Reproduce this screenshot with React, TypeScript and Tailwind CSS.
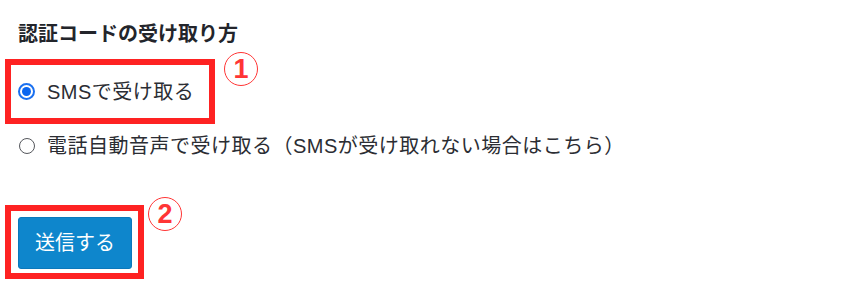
export default function App() {
  return (
    <div
      className="min-h-[304px] w-[861px] bg-white pt-[19px] text-[#2b2d33]"
      style={{ fontFamily: '"Liberation Sans", "Noto Sans CJK JP", sans-serif' }}
    >
      <h2 className="ml-[18px] text-[20px] font-bold leading-[30px] text-[#23252b]">認証コードの受け取り方</h2>

      {/* option 1, boxed */}
      <div className="mt-[10px] flex items-start">
        <label className="ml-[5px] box-border flex h-[65px] w-[210px] items-center border-[6px] border-[#fe2222] pl-[7px]">
          <span className="flex h-[17px] w-[17px] items-center justify-center rounded-full border-[2px] border-[#1a70f0] bg-white">
            <span className="h-[9px] w-[9px] rounded-full bg-[#0a66f0]" />
          </span>
          <span className="ml-3 text-[20px] leading-[30px] tracking-[0.5px]">SMSで受け取る</span>
        </label>
        <Marker n="1" className="-mt-[7px] ml-[9px]" />
      </div>

      {/* option 2 */}
      <label className="mt-[7px] flex h-[30px] items-center pl-[19px]">
        <span className="h-[16px] w-[16px] rounded-full border-[1.5px] border-[#55575c] bg-white" />
        <span className="ml-3 text-[20px] leading-[30px] tracking-[0.5px]">
          電話自動音声で受け取る（SMSが受け取れない場合はこちら）
        </span>
      </label>

      {/* submit, boxed */}
      <div className="mt-[44px] flex items-start">
        <div className="ml-[5px] box-border h-[74px] w-[139px] border-[6px] border-[#fe2222] pl-[7px] pt-[6px]">
          <button className="flex h-[52px] w-[114px] items-center justify-center rounded-[3px] border border-[#0b78bb] bg-[#0e86cc] text-[20px] text-white">
            送信する
          </button>
        </div>
        <Marker n="2" className="-mt-[8px] ml-[4px]" />
      </div>
    </div>
  )
}

function Marker({ n, className }: { n: string; className: string }) {
  return (
    <span
      className={`flex h-[34px] w-[34px] items-center justify-center rounded-full border-[1.5px] border-[#ff3535] text-[27px] font-bold leading-none text-[#ff3535] ${className}`}
    >
      {n}
    </span>
  )
}
